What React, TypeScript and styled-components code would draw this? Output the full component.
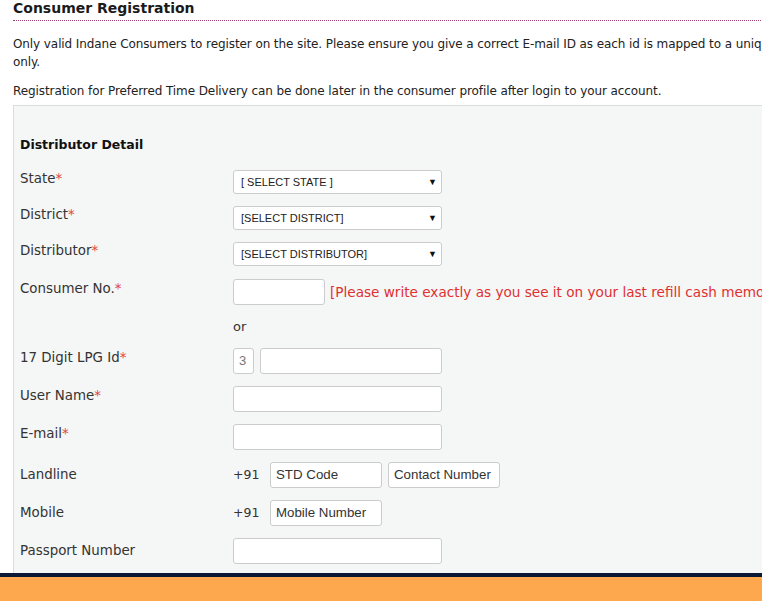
import React from "react";
import styled, { createGlobalStyle } from "styled-components";

const Global = createGlobalStyle`
  html, body { margin: 0; padding: 0; background: #fff; overflow: hidden; }
  body { font-family: "DejaVu Sans", Verdana, sans-serif; color: #222; }
`;

const Page = styled.div`
  display: flex;
  flex-direction: column;
  height: 601px;
  width: 762px;
  overflow: hidden;
`;

const Content = styled.div`
  flex: 1;
  overflow: hidden;
  padding-left: 13px;
  width: 1000px;
`;

const Title = styled.h2`
  margin: 0;
  font-size: 14px;
  font-weight: bold;
  color: #1a1a1a;
  line-height: 17px;
  padding-bottom: 3px;
  border-bottom: 1px dotted #a0407a;
`;

const Para = styled.p<{ $top: number }>`
  margin: ${(p) => p.$top}px 0 0;
  font-size: 12px;
  letter-spacing: -0.09px;
  line-height: 18px;
  color: #222;
`;

const Panel = styled.div`
  margin-top: 5px;
  background: #f5f6f6;
  border: 1px solid #dcdcdc;
  padding: 30px 0 20px 6px;
`;

const Section = styled.h3`
  margin: 0 0 10px;
  font-size: 12.5px;
  font-weight: bold;
  color: #111;
  line-height: 18px;
`;

const Row = styled.div<{ $h: number }>`
  display: grid;
  grid-template-columns: 213px 1fr;
  align-items: center;
  height: ${(p) => p.$h}px;
`;

const Label = styled.div<{ $raise?: boolean }>`
  font-size: 13.4px;
  color: #333;
  line-height: 18px;
  margin-bottom: ${(p) => (p.$raise ? 6 : 0)}px;
`;

const Star = styled.span`
  color: #e04848;
`;

const Field = styled.div`
  display: flex;
  align-items: center;
  gap: 6px;
`;

const Select = styled.div`
  box-sizing: border-box;
  width: 209px;
  height: 24px;
  background: #fff;
  border: 1px solid #ccc;
  border-radius: 3px;
  display: flex;
  align-items: center;
  justify-content: space-between;
  padding: 0 4px 0 7px;
  font-family: "Liberation Sans", Arial, sans-serif;
  font-size: 11px;
  color: #222;
`;

const Arrow = styled.span`
  font-size: 9px;
  color: #111;
`;

const Input = styled.div<{ $w: number }>`
  box-sizing: border-box;
  width: ${(p) => p.$w}px;
  height: 26px;
  background: #fff;
  border: 1px solid #ccc;
  border-radius: 3px;
  display: flex;
  align-items: center;
  padding: 0 5px;
  font-family: "Liberation Sans", Arial, sans-serif;
  font-size: 13.3px;
  color: #333;
  white-space: nowrap;
`;

const Digit = styled.span`
  color: #777;
  font-size: 13px;
`;

const Prefix = styled.span`
  font-size: 12.5px;
  color: #333;
  width: 31px;
`;

const Hint = styled.span`
  font-size: 13.6px;
  color: #e03030;
  white-space: nowrap;
  margin-left: -1px;
`;

const Or = styled.div`
  font-size: 13px;
  color: #333;
`;

const FooterLine = styled.div`
  height: 4px;
  background: #0b1836;
`;

const Footer = styled.div`
  height: 24px;
  background: #fda84e;
`;

export default function App() {
  return (
    <Page>
      <Global />
      <Content>
        <Title>Consumer Registration</Title>
        <Para $top={14}>
          Only valid Indane Consumers to register on the site. Please ensure you give a correct E-mail ID as each id is mapped to a unique Consumer
          <br />
          only.
        </Para>
        <Para $top={11}>
          Registration for Preferred Time Delivery can be done later in the consumer profile after login to your account.
        </Para>
        <Panel>
          <Section>Distributor Detail</Section>
          <Row $h={36}>
            <Label $raise>State<Star>*</Star></Label>
            <Field><Select>[ SELECT STATE ]<Arrow>▼</Arrow></Select></Field>
          </Row>
          <Row $h={36}>
            <Label $raise>District<Star>*</Star></Label>
            <Field><Select>[SELECT DISTRICT]<Arrow>▼</Arrow></Select></Field>
          </Row>
          <Row $h={36}>
            <Label $raise>Distributor<Star>*</Star></Label>
            <Field><Select>[SELECT DISTRIBUTOR]<Arrow>▼</Arrow></Select></Field>
          </Row>
          <Row $h={39}>
            <Label $raise>Consumer No.<Star>*</Star></Label>
            <Field>
              <Input $w={92} />
              <Hint>[Please write exactly as you see it on your last refill cash memo]</Hint>
            </Field>
          </Row>
          <Row $h={31}>
            <div />
            <Or>or</Or>
          </Row>
          <Row $h={37}>
            <Label $raise>17 Digit LPG Id<Star>*</Star></Label>
            <Field>
              <Input $w={21}><Digit>3</Digit></Input>
              <Input $w={182} />
            </Field>
          </Row>
          <Row $h={39}>
            <Label $raise>User Name<Star>*</Star></Label>
            <Field><Input $w={209} /></Field>
          </Row>
          <Row $h={37}>
            <Label $raise>E-mail<Star>*</Star></Label>
            <Field><Input $w={209} /></Field>
          </Row>
          <Row $h={39}>
            <Label>Landline</Label>
            <Field>
              <Prefix>+91</Prefix>
              <Input $w={112}>STD Code</Input>
              <Input $w={112}>Contact Number</Input>
            </Field>
          </Row>
          <Row $h={37}>
            <Label>Mobile</Label>
            <Field>
              <Prefix>+91</Prefix>
              <Input $w={112}>Mobile Number</Input>
            </Field>
          </Row>
          <Row $h={39}>
            <Label>Passport Number</Label>
            <Field><Input $w={209} /></Field>
          </Row>
        </Panel>
      </Content>
      <FooterLine />
      <Footer />
    </Page>
  );
}
